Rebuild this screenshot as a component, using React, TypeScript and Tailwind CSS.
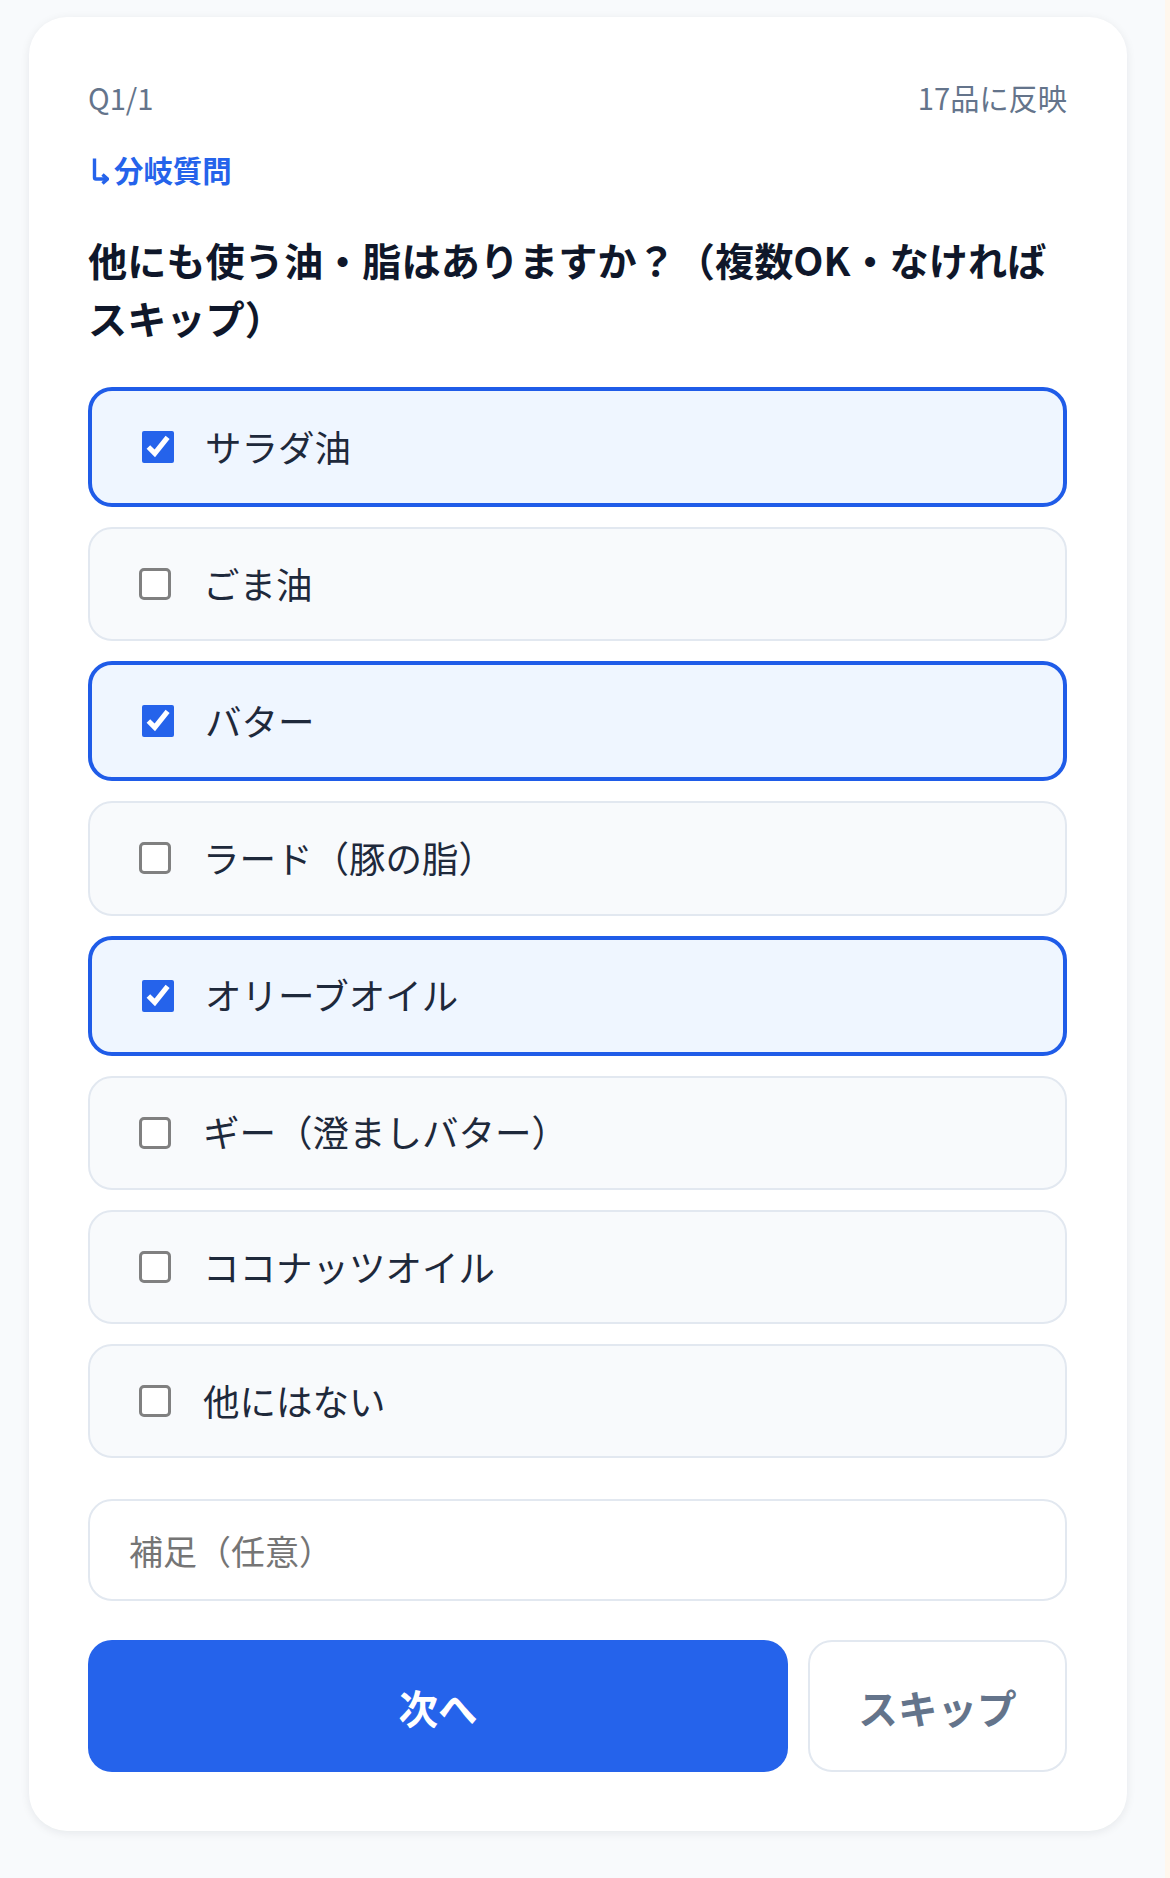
import React from 'react';

const OPTIONS = [
  { label: 'サラダ油', checked: true },
  { label: 'ごま油', checked: false },
  { label: 'バター', checked: true },
  { label: 'ラード（豚の脂）', checked: false },
  { label: 'オリーブオイル', checked: true },
  { label: 'ギー（澄ましバター）', checked: false },
  { label: 'ココナッツオイル', checked: false },
  { label: '他にはない', checked: false },
];

function OptionRow({ label, checked }: { label: string; checked: boolean }) {
  return (
    <label
      className={
        checked
          ? 'flex items-center gap-[31px] h-[120px] px-[50px] rounded-[24px] border-[4px] border-[#1f5ce8] bg-[#eff6ff]'
          : 'flex items-center gap-[32px] h-[114.25px] px-[49px] rounded-[24px] border-2 border-[#e2e8f0] bg-[#f8fafc]'
      }
    >
      {checked ? (
        <input type="checkbox" defaultChecked className="w-8 h-8 shrink-0 accent-[#2563eb]" />
      ) : (
        <input type="checkbox" className="appearance-none w-8 h-8 shrink-0 rounded-[5px] border-[3px] border-[#808080] bg-white" />
      )}
      <span className="text-[36.5px] leading-none text-[#1e293b]">{label}</span>
    </label>
  );
}

export default function App() {
  return (
    <div
      className="flex min-h-[1878px] bg-[#f8fafc]"
      style={{ fontFamily: '"Noto Sans CJK JP", "Noto Sans", sans-serif' }}
    >
      <div className="flex-1 pt-[17px] pl-[29px] pr-[38px] pb-[46px]">
        <div className="h-[1814px] rounded-[38px] bg-white pt-[60px] pl-[59px] pr-[60px] shadow-[0_2px_10px_rgba(15,23,42,0.08)]">
          <div className="flex justify-between items-center text-[29.2px] leading-[40px] text-[#64748b]">
            <span>Q1/1</span>
            <span>17品に反映</span>
          </div>

          <div className="mt-[32px] flex items-center gap-[5px] pl-[3px] text-[29.4px] leading-[40px] font-bold text-[#2563eb]">
            <svg width="18" height="28" viewBox="0 0 18 28" fill="none" stroke="currentColor" strokeWidth="3.4" className="mt-[4px]">
              <path d="M3.5 1.5V20.5Q3.5 22 5 22H16" />
              <path d="M11.5 17.5 16.5 22 11.5 26.5" />
            </svg>
            <span>分岐質問</span>
          </div>

          <h1 className="mt-[41px] text-[39.2px] leading-[58px] font-bold text-[#0f172a]">
            他にも使う油・脂はありますか？（複数OK・なければスキップ）
          </h1>

          <div className="mt-[41px] flex flex-col gap-[20px]">
            {OPTIONS.map((option) => (
              <OptionRow key={option.label} label={option.label} checked={option.checked} />
            ))}
          </div>

          <input
            placeholder="補足（任意）"
            className="mt-[41px] block w-full h-[102px] px-[39px] rounded-[24px] border-2 border-[#e2e8f0] bg-white text-[34px] placeholder:text-[#757575]"
          />

          <div className="mt-[39px] flex gap-[20px]">
            <button className="w-[700px] h-[132px] rounded-[24px] bg-[#2563eb] text-white text-[39.6px] font-bold">
              次へ
            </button>
            <button className="flex-1 h-[132px] rounded-[24px] border-2 border-[#e2e8f0] bg-white text-[#64748b] text-[39.6px] font-bold">
              スキップ
            </button>
          </div>
        </div>
      </div>
      <div className="w-[5px] bg-[#fff7ed]" />
    </div>
  );
}
